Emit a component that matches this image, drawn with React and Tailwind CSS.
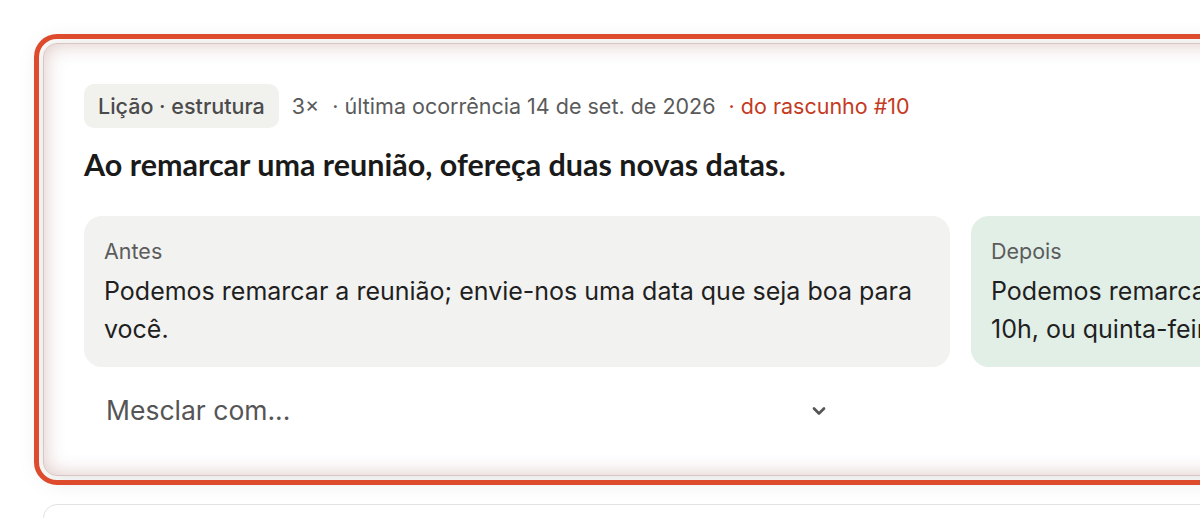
import React from 'react';
import { ChevronDown } from 'lucide-react';

const LessonCard = () => {
  return (
    <div className="w-[1835px] rounded-[14px] border border-[#d9c5c1] bg-white outline-solid outline-[5px] outline-offset-[4px] outline-[#dd4a2c] shadow-[0_2px_26px_rgba(0,0,0,0.13),inset_0_0_20px_rgba(140,70,60,0.3)] px-[40px] pt-[40px] pb-[38px]">
      {/* Meta row */}
      <div className="flex items-center gap-[13px] text-[21.5px] text-[#5a5a5a]">
        <span className="h-[44px] px-[14px] flex items-center rounded-[10px] bg-[#f1f1ee] text-[#4b4b4b] font-medium">
          Lição · estrutura
        </span>
        <span>3×</span>
        <span>· última ocorrência 14 de set. de 2026</span>
        <span className="text-[#c43a22]">· do rascunho #10</span>
      </div>

      {/* Title */}
      <h2 className="mt-[18px] text-[30.5px] leading-[36px] font-bold text-[#1a1a1a] font-['Lato',sans-serif]">
        Ao remarcar uma reunião, ofereça duas novas datas.
      </h2>

      {/* Before / after */}
      <div className="mt-[34px] grid grid-cols-2 gap-[21px]">
        <div className="rounded-[18px] bg-[#f2f2f0] px-[20px] pt-[20px] pb-[19px]">
          <p className="text-[21.5px] leading-[30px] text-[#5c5c5c]">Antes</p>
          <p className="mt-[6px] text-[25px] leading-[38px] text-[#1f1f1f]">
            Podemos remarcar a reunião; envie-nos uma data que seja boa para você.
          </p>
        </div>
        <div className="rounded-[18px] bg-[#e2efe7] px-[20px] pt-[20px] pb-[19px]">
          <p className="text-[21.5px] leading-[30px] text-[#5c5c5c]">Depois</p>
          <p className="mt-[6px] text-[25px] leading-[38px] text-[#1f1f1f]">
            Podemos remarcar para terça-feira, 16 de set., às
            <br />
            10h, ou quinta-feira, 18 de set., às 15h.
          </p>
        </div>
      </div>

      {/* Merge select */}
      <div className="mt-[18px] w-[761px] h-[52px] flex items-center justify-between pl-[22px] pr-[16px] text-[26.5px] text-[#555]">
        <span>Mesclar com...</span>
        <ChevronDown size={20} strokeWidth={3.2} className="text-[#555]" />
      </div>
    </div>
  );
};

export default function App() {
  return (
    <div className="h-[518px] overflow-hidden bg-white pt-[43px] pl-[43px] font-['Inter',sans-serif]">
      <LessonCard />
      <div className="mt-[28px] w-[1835px] h-[120px] rounded-[14px] border border-[#e2e2e2] bg-white" />
    </div>
  );
}
